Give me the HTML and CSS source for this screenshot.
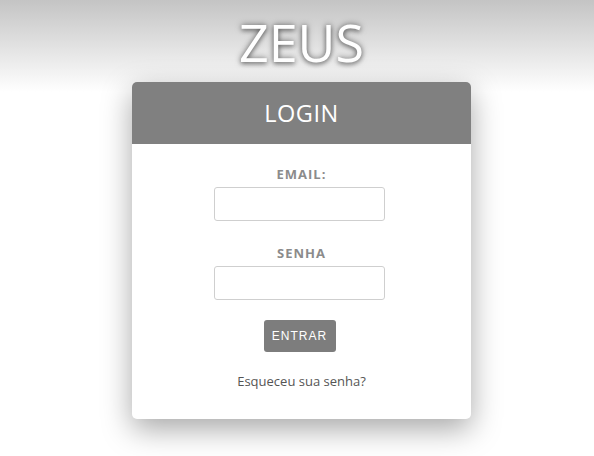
FILE: index.html
```html
<!DOCTYPE html>
<html lang="pt">
<head>
<meta charset="utf-8">
<title>Zeus - Login</title>
<link rel="stylesheet" href="styles.css">
</head>
<body>
<div class="page">
  <h1 class="brand">ZEUS</h1>
  <div class="card">
    <div class="card-header">LOGIN</div>
    <form class="card-body">
      <label class="field-label" for="email">EMAIL:</label>
      <input class="field-input" id="email" type="text">
      <label class="field-label second" for="senha">SENHA</label>
      <input class="field-input" id="senha" type="password">
      <button class="btn" type="button">ENTRAR</button>
      <a class="forgot" href="#">Esqueceu sua senha?</a>
    </form>
  </div>
</div>
</body>
</html>
```
FILE: styles.css
```css
html, body {
  margin: 0;
  padding: 0;
}
body {
  background: #fff linear-gradient(to bottom, #c4c4c4 0px, #ffffff 92px) no-repeat;
  background-size: 100% 92px;
  height: 456px;
  overflow: hidden;
  font-family: "Open Sans", "Noto Sans", sans-serif;
}
.page {
  display: flex;
  flex-direction: column;
  align-items: center;
  padding-left: 9px;
}
.brand {
  margin: 0;
  padding-top: 10px;
  font-family: "Open Sans", sans-serif;
  font-weight: 400;
  font-size: 52px;
  line-height: 64px;
  height: 72px;
  color: #fff;
  text-shadow: 0 0 6px rgba(0,0,0,0.55), 0 2px 4px rgba(0,0,0,0.3);
}
.card {
  width: 339px;
  background: #fff;
  border-radius: 5px;
  overflow: hidden;
  box-shadow: 0 10px 30px rgba(0,0,0,0.35);
}
.card-header {
  background: #808080;
  color: #fff;
  height: 62px;
  display: flex;
  align-items: center;
  justify-content: center;
  font-size: 23.5px;
  letter-spacing: 0.5px;
}
.card-body {
  display: flex;
  flex-direction: column;
  align-items: center;
  padding: 21px 0 29px;
}
.field-label {
  font-size: 13px;
  font-weight: 700;
  letter-spacing: 1px;
  color: #8b8b8b;
  line-height: 18px;
  margin-bottom: 4px;
}
.field-label.second {
  margin-top: 23px;
}
.field-input {
  box-sizing: border-box;
  width: 171px;
  height: 34px;
  border: 1px solid #cfcfcf;
  border-radius: 3px;
  background: #fff;
  outline: none;
  margin: 0 4px 0 0;
}
.btn {
  margin: 20px 4px 0 0;
  width: 72px;
  height: 32px;
  border: none;
  border-radius: 3px;
  background: #7d7d7d;
  color: #fff;
  font-family: "Liberation Sans", Arial, sans-serif;
  font-size: 12px;
  letter-spacing: 1px;
  padding: 0;
}
.forgot {
  margin-top: 20px;
  font-size: 13px;
  color: #555;
  text-decoration: none;
  line-height: 18px;
}
```
